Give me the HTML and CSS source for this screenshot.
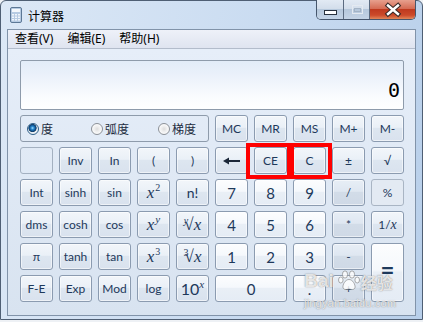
FILE: index.html
```html
<!DOCTYPE html>
<html lang="zh-CN">
<head>
  <meta charset="UTF-8" />
  <title>计算器</title>
  <link rel="stylesheet" href="styles.css">
</head>
<body>

  <div class="window">
    <div class="titlebar">
      <svg class="app-icon" width="12" height="16" viewBox="0 0 12 16">
        <rect x="0.5" y="0.5" width="11" height="15" rx="1.5" fill="#b7cbe2" stroke="#5d7896" />
        <rect x="2" y="2" width="8" height="3" fill="#f4f8fc" />
        <g fill="#f1f6fb">
          <rect x="2" y="7" width="2" height="1.5" />
          <rect x="5" y="7" width="2" height="1.5" />
          <rect x="8" y="7" width="2" height="1.5" />
          <rect x="2" y="9.5" width="2" height="1.5" />
          <rect x="5" y="9.5" width="2" height="1.5" />
          <rect x="8" y="9.5" width="2" height="1.5" />
          <rect x="2" y="12" width="2" height="1.5" />
          <rect x="5" y="12" width="2" height="1.5" />
          <rect x="8" y="12" width="2" height="1.5" />
        </g>
      </svg>
      <span class="title">计算器</span>

      <div class="caption">
        <button class="cap min">
          <svg width="26" height="19" viewBox="0 0 26 19">
            <rect x="7.5" y="10.5" width="12" height="4" fill="#fff" stroke="#29323e" />
          </svg>
        </button>
        <button class="cap max">
          <svg width="26" height="19" viewBox="0 0 26 19">
            <rect x="8.5" y="5.5" width="10" height="8" fill="none" stroke="#e4eaf1" />
            <rect x="10.5" y="8.5" width="6" height="3" fill="none" stroke="#a3b3c5" />
          </svg>
        </button>
        <button class="cap close">
          <svg width="46" height="19" viewBox="0 0 46 19">
            <path d="M18 5.5 L28 14 M28 5.5 L18 14" stroke="#3a2a28" stroke-width="4.6" stroke-linecap="square" />
            <path d="M18 5.5 L28 14 M28 5.5 L18 14" stroke="#fff" stroke-width="2.4" stroke-linecap="square" />
          </svg>
        </button>
      </div>
    </div>

    <div class="client">
      <div class="menubar">
        <span class="menu">查看(V)</span>
        <span class="menu">编辑(E)</span>
        <span class="menu">帮助(H)</span>
      </div>

      <div class="calc">
        <div class="display">0</div>

        <div class="keys">
          <div class="pad">
            <div class="angles">
              <label class="opt deg"><span class="radio on"></span>度</label>
              <label class="opt rad"><span class="radio"></span>弧度</label>
              <label class="opt"><span class="radio"></span>梯度</label>
            </div>

            <button class="key blank"></button>
            <button class="key">Inv</button>
            <button class="key">In</button>
            <button class="key">(</button>
            <button class="key">)</button>

            <button class="key">Int</button>
            <button class="key">sinh</button>
            <button class="key">sin</button>
            <button class="key math"><i>x</i><sup>2</sup></button>
            <button class="key big">n!</button>

            <button class="key">dms</button>
            <button class="key">cosh</button>
            <button class="key">cos</button>
            <button class="key math"><i>x</i><sup><i>y</i></sup></button>
            <button class="key math"><span class="idx"><i>y</i></span>√<i>x</i></button>

            <button class="key">π</button>
            <button class="key">tanh</button>
            <button class="key">tan</button>
            <button class="key math"><i>x</i><sup>3</sup></button>
            <button class="key math"><span class="idx">3</span>√<i>x</i></button>

            <button class="key">F-E</button>
            <button class="key">Exp</button>
            <button class="key">Mod</button>
            <button class="key">log</button>
            <button class="key ten">10<sup><i>x</i></sup></button>
          </div>

          <div class="pad">
            <button class="key">MC</button>
            <button class="key">MR</button>
            <button class="key">MS</button>
            <button class="key">M+</button>
            <button class="key">M-</button>

            <button class="key">
              <svg width="18" height="8" viewBox="0 0 18 8">
                <path d="M5 4 H17" stroke="#1a2638" stroke-width="2" />
                <path d="M0 4 L6 0.5 V7.5 Z" fill="#1a2638" />
              </svg>
            </button>
            <button class="key">CE</button>
            <button class="key">C</button>
            <button class="key">±</button>
            <button class="key">√</button>

            <button class="key num">7</button>
            <button class="key num">8</button>
            <button class="key num">9</button>
            <button class="key op">/</button>
            <button class="key off">%</button>

            <button class="key num">4</button>
            <button class="key num">5</button>
            <button class="key num">6</button>
            <button class="key op">*</button>
            <button class="key">1/<i class="var">x</i></button>

            <button class="key num">1</button>
            <button class="key num">2</button>
            <button class="key num">3</button>
            <button class="key op">-</button>
            <button class="key num equals">=</button>

            <button class="key num zero">0</button>
            <button class="key num">.</button>
            <button class="key op">+</button>
          </div>
        </div>

        <div class="mark mark-ce"></div>
        <div class="mark mark-c"></div>

        <div class="watermark">
          <div class="wm-top">
            <span class="wm-bai">Bai</span>
            <svg class="wm-paw" width="22" height="21" viewBox="0 0 22 21">
              <g fill="rgba(255,255,255,0.78)" stroke="rgba(110,110,110,0.55)" stroke-width="1">
                <ellipse cx="7" cy="4.5" rx="2.6" ry="3.6" />
                <ellipse cx="14" cy="4.5" rx="2.6" ry="3.6" />
                <ellipse cx="2.8" cy="10" rx="2.3" ry="3" />
                <ellipse cx="19.2" cy="10" rx="2.3" ry="3" />
                <path d="M11 9.5 C7 9.5 4.5 15 5 17.5 C5.6 20 8.5 19.8 11 19 C13.5 19.8 16.4 20 17 17.5 C17.5 15 15 9.5 11 9.5 Z" />
              </g>
            </svg>
            <span class="wm-cn">经验</span>
          </div>
          <div class="wm-url">jingyan.baidu.com</div>
        </div>
      </div>
    </div>
  </div>

</body>
</html>
```

FILE: styles.css
```css
body {
  margin: 0;
  background: #eef1f5;
  font-family: Lato, "Noto Sans", "Noto Sans CJK SC", sans-serif;
}

.window {
  width: 423px;
  height: 320px;
  box-sizing: border-box;
  border: 1px solid #4f5f74;
  border-radius: 6px 6px 0 0;
  background: linear-gradient(100deg, #dce8f6 0%, #cadcf1 55%, #b8cfea 100%);
  display: flex;
  flex-direction: column;
}

/* title bar */

.titlebar {
  height: 28px;
  flex-shrink: 0;
  display: flex;
  align-items: center;
  padding-left: 9px;
}

.app-icon {
  margin-right: 6px;
}

.title {
  font: 12px "Noto Sans CJK SC", sans-serif;
  color: #000;
}

.caption {
  margin-left: auto;
  margin-right: 6px;
  margin-top: -1px;
  align-self: flex-start;
  display: flex;
  height: 20px;
  box-sizing: border-box;
  border: 1px solid #46566c;
  border-top: 0;
  border-radius: 0 0 5px 5px;
  overflow: hidden;
}

.cap {
  padding: 0;
  border: 0;
  height: 19px;
  display: block;
}

.cap svg {
  display: block;
}

.min,
.max {
  width: 26px;
  background: linear-gradient(#e2eaf4 0%, #d3deeb 45%, #b6c8dc 50%, #c4d4e6 100%);
}

.max,
.close {
  border-left: 1px solid #5b6b80;
}

.close {
  width: 46px;
  background: linear-gradient(#e7a08e 0%, #d56c55 45%, #bf3a1f 50%, #cc4a2a 80%, #e2875a 100%);
}

/* client area */

.client {
  flex: 1;
  margin: 0 6px 3px;
  border: 1px solid #8193a9;
  display: flex;
  flex-direction: column;
}

.menubar {
  height: 18px;
  flex-shrink: 0;
  display: flex;
  align-items: center;
  gap: 14px;
  padding-left: 7px;
  background: linear-gradient(#eef1f9, #dfe4f0);
  border-bottom: 1px solid #b3bccb;
}

.menu {
  font: 12px/18px "Noto Sans", "Noto Sans CJK SC", sans-serif;
  color: #000;
}

.calc {
  flex: 1;
  position: relative;
  padding: 11px 11px 0 12px;
  background: linear-gradient(#e6eef9, #d8e3f0);
}

.display {
  height: 50px;
  box-sizing: border-box;
  border: 1px solid #8e9bab;
  border-radius: 2px;
  margin-bottom: 5px;
  padding: 19px 3px 0 0;
  text-align: right;
  font: 20px/20px "DejaVu Sans Mono", monospace;
  color: #000;
  background: linear-gradient(#e2ecf8 0%, #e9f0fa 25%, #fafcfe 75%, #fff 100%);
}

.keys {
  display: flex;
  gap: 6px;
}

.pad {
  display: grid;
  grid-template-columns: repeat(5, 33px);
  grid-auto-rows: 27px;
  gap: 5px 6px;
}

/* angle radio group */

.angles {
  grid-column: 1 / -1;
  border: 1px solid #8e9bab;
  border-radius: 3px;
  display: flex;
  align-items: center;
  padding-left: 6px;
  font: 12px "Noto Sans CJK SC", sans-serif;
  color: #1d2c40;
}

.opt {
  display: flex;
  align-items: center;
  gap: 2px;
}

.deg {
  width: 64px;
}

.rad {
  width: 67px;
}

.radio {
  width: 12px;
  height: 12px;
  box-sizing: border-box;
  border-radius: 50%;
  border: 1px solid #8b9097;
  background: radial-gradient(circle, #dcdcdc 0, #eeeeee 35%, #fbfbfb 70%, #d8d8d8 100%);
}

.radio.on {
  border-color: #2e5f89;
  background: radial-gradient(circle at 45% 40%, #a6e2ff 0, #2b8ad0 1.5px, #0d4b86 3.2px, #173d63 3.8px, #e6ecf2 4.4px, #f7f9fb 100%);
}

/* keys */

.key {
  padding: 0;
  border: 1px solid #8b9bb0;
  border-radius: 3px;
  background: linear-gradient(#f2f6fa 0%, #eaf0f7 45%, #dde6f0 50%, #d9e2ee 100%);
  box-shadow: inset 0 0 0 1px rgba(255, 255, 255, 0.55);
  color: #1e395b;
  font: 12px Lato, "Noto Sans", sans-serif;
  text-align: center;
  white-space: nowrap;
}

.key svg {
  display: block;
  margin: 0 auto;
}

.num {
  font-size: 15px;
  background: linear-gradient(#fcfdfe 0%, #f5f8fc 45%, #e9eff6 50%, #e5ecf5 100%);
}

.op {
  background: linear-gradient(#e7eef6 0%, #dfe7f1 45%, #d2dce8 50%, #cfd9e6 100%);
}

.off {
  border-color: #a9b5c4;
  background: #e3eaf3;
  box-shadow: none;
}

.blank {
  border-color: #a3b0c0;
  background: transparent;
  box-shadow: none;
}

.equals {
  grid-row: span 2;
  font-size: 24px;
  font-weight: bold;
  padding-bottom: 6px;
}

.zero {
  grid-column: span 2;
}

.big {
  font-size: 14px;
}

.math {
  font: italic 17px/20px "Liberation Serif", serif;
}

.math sup {
  font-size: 10px;
  font-style: normal;
  vertical-align: 7px;
  line-height: 0;
  margin-left: 1px;
}

.math sup i {
  font-size: 11px;
}

.idx {
  font-size: 10px;
  font-style: normal;
  vertical-align: 6px;
  line-height: 0;
  margin-right: -4px;
}

.ten {
  font-size: 16px;
}

.ten sup {
  font: italic 11px "Liberation Serif", serif;
  vertical-align: 7px;
  line-height: 0;
}

.var {
  font: italic 14px "Liberation Serif", serif;
}

/* red annotation boxes */

.mark {
  position: absolute;
  top: 94px;
  height: 36px;
  box-sizing: border-box;
  border: 4px solid #ff0000;
}

.mark-ce {
  left: 238px;
  width: 45px;
}

.mark-c {
  left: 282px;
  width: 42px;
}

/* watermark */

.watermark {
  position: absolute;
  left: 296px;
  top: 220px;
  color: rgba(255, 255, 255, 0.8);
  text-shadow: 0 0 1px rgba(90, 90, 90, 0.7), 0 0 2px rgba(120, 120, 120, 0.3);
}

.wm-top {
  display: flex;
  align-items: flex-end;
  height: 22px;
}

.wm-bai {
  font: bold 19px/20px "Liberation Sans", sans-serif;
}

.wm-paw {
  margin: 0 1px 0 4px;
}

.wm-cn {
  font: bold 16px/17px "Noto Sans CJK SC", sans-serif;
}

.wm-url {
  margin-top: 6px;
  font: 11px/12px "Liberation Sans", sans-serif;
  letter-spacing: 0.2px;
}
```
